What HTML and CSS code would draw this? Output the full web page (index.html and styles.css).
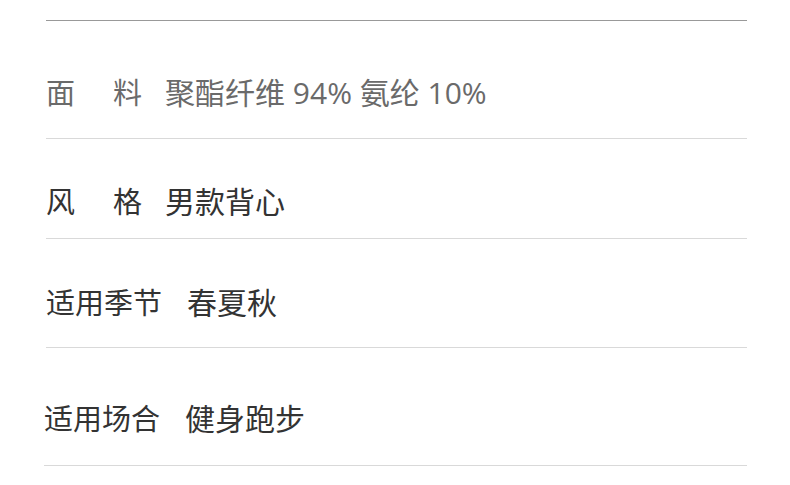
FILE: index.html
```html
<!DOCTYPE html>
<html lang="zh-CN">
<head>
<meta charset="utf-8">
<title>商品参数</title>
<link rel="stylesheet" href="styles.css">
</head>
<body>
<ul class="params">
  <li class="param param-1 param-muted">
    <span class="label label-split"><span>面</span><span>料</span></span>
    <span class="value">聚酯纤维 94% 氨纶 10%</span>
  </li>
  <li class="param param-2">
    <span class="label label-split"><span>风</span><span>格</span></span>
    <span class="value">男款背心</span>
  </li>
  <li class="param param-3">
    <span class="label">适用季节</span>
    <span class="value value-wide">春夏秋</span>
  </li>
  <li class="param param-4">
    <span class="label">适用场合</span>
    <span class="value value-wide">健身跑步</span>
  </li>
</ul>
</body>
</html>
```

FILE: styles.css
```css
html, body {
  margin: 0;
  padding: 0;
  background: #ffffff;
}

body {
  font-family: "Open Sans", "Noto Sans CJK SC", sans-serif;
  font-size: 29px;
  color: #333333;
}

.params {
  list-style: none;
  margin: 20px 0 0 46px;
  padding: 0;
  width: 701px;
  border-top: 1px solid #999999;
}

.param {
  display: flex;
  align-items: center;
  line-height: 40px;
  border-bottom: 1px solid #d9d9d9;
}

.param-1 { padding: 52px 0 25px; }
.param-2 { padding: 43px 0 16px; }
.param-3 { padding: 44px 0 24px; }
.param-4 { padding: 51px 0 26px; margin-left: -2px; }

.param-muted {
  color: #6a6a6a;
}

.label {
  display: flex;
  white-space: nowrap;
}

.label-split {
  gap: 38px;
}

.value {
  margin-left: 23px;
  font-size: 30px;
  white-space: nowrap;
}

.value-wide {
  margin-left: 25px;
}
```
